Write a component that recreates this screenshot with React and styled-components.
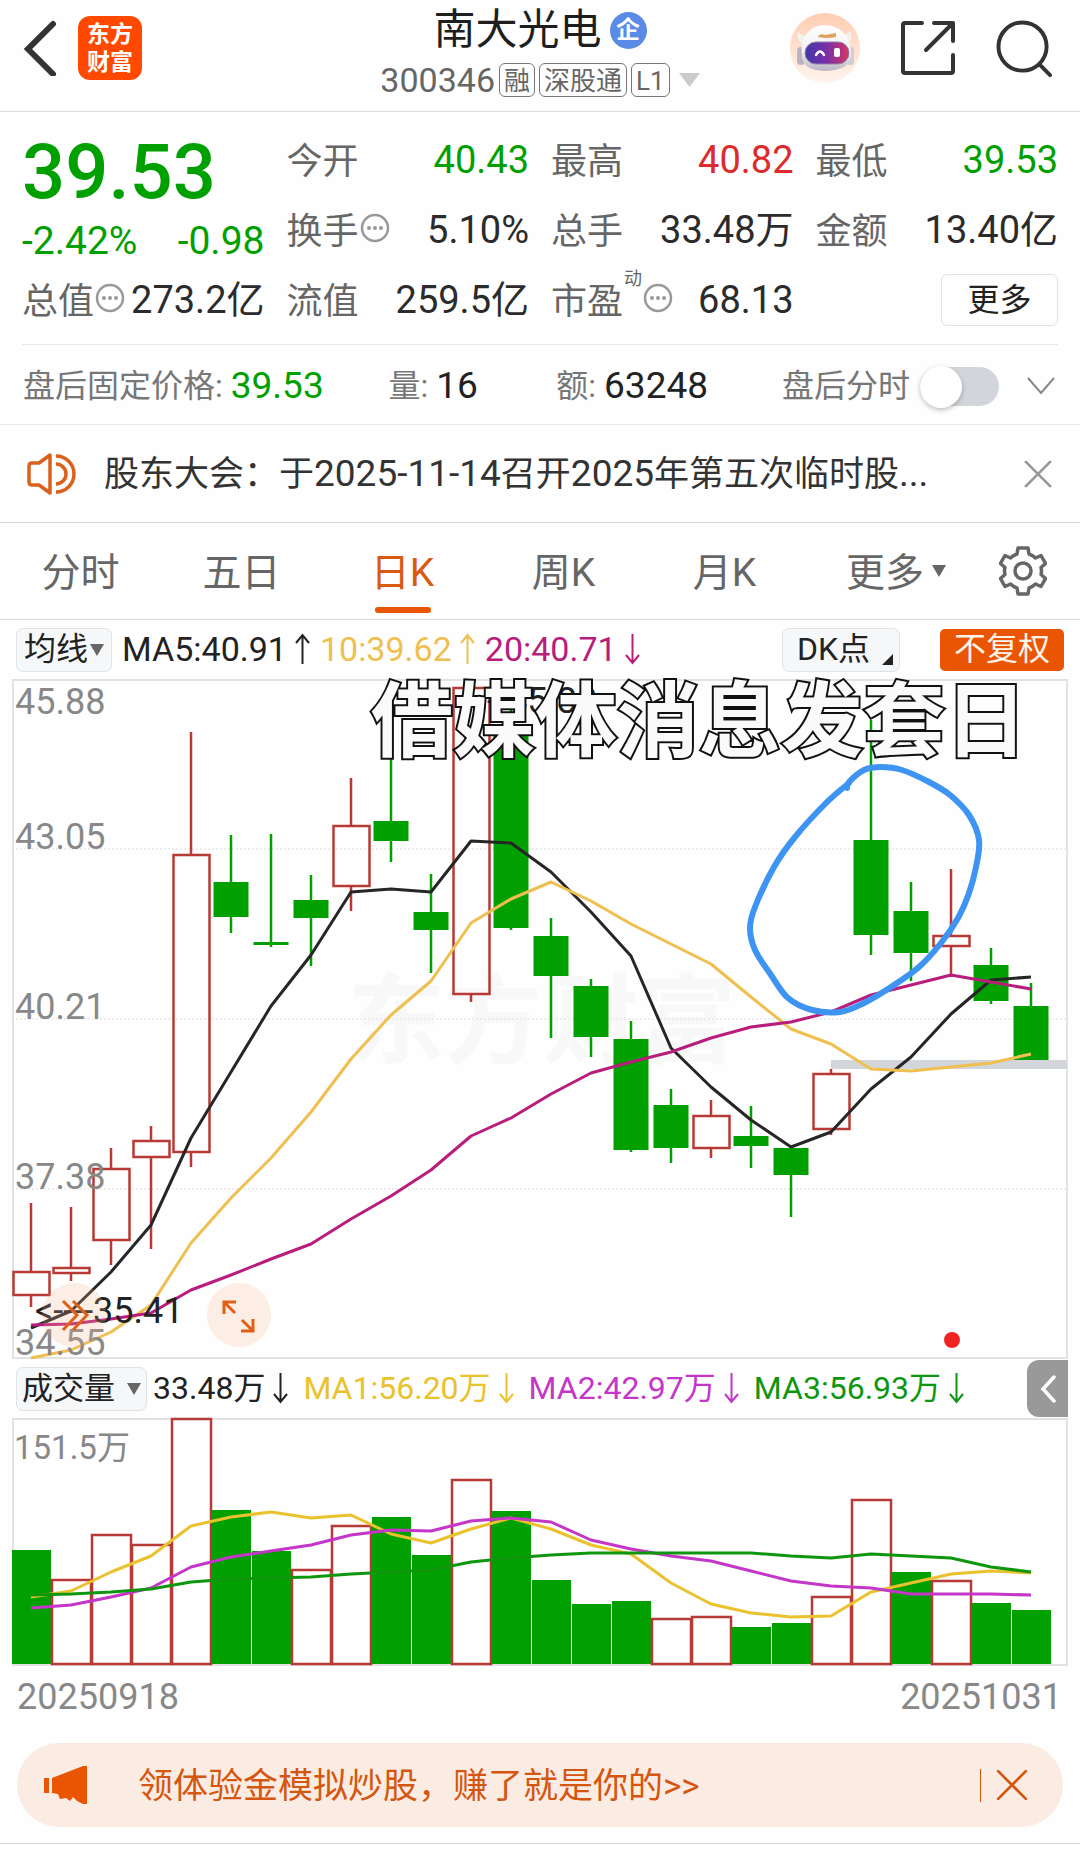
import React from "react";
import styled, { createGlobalStyle } from "styled-components";

const GREEN = "#00a000";
const RED = "#b83a36";
const ORANGE = "#ea5504";
const FONT = 'Roboto, "Noto Sans CJK SC", sans-serif';

const Global = createGlobalStyle`
  * { box-sizing: border-box; }
  body { margin: 0; background: #fefefe; color: #2b2b2b; font-family: ${FONT}; line-height: 1.2; }
  button { font-family: inherit; line-height: inherit; background: none; border: 0; padding: 0; margin: 0; color: inherit; cursor: pointer; }
  svg { display: block; }
`;

const Page = styled.div`
  display: flex;
  flex-direction: column;
  white-space: nowrap;
`;

/* ---------- header ---------- */
const Header = styled.header`
  display: grid;
  grid-template-columns: 1fr auto 1fr;
  height: 112px;
  border-bottom: 1px solid #d9dcde;
`;
const HeaderLeft = styled.div`
  display: flex;
  gap: 20px;
  padding: 16px 0 0 22px;
`;
const HeaderRight = styled.div`
  display: flex;
  justify-content: flex-end;
  gap: 40px;
  padding: 13px 27px 0 0;
`;
const IconButton = styled.button`
  display: flex;
  align-items: center;
  justify-content: center;
  height: ${(p) => p.$h || 70}px;
`;
const AppLogo = styled.div`
  width: 64px;
  height: 64px;
  border-radius: 12px;
  background: #ff4800;
  color: #fff;
  font-size: 23px;
  line-height: 28px;
  font-weight: 700;
  text-align: center;
  padding-top: 5px;
  white-space: normal;
`;
const TitleBlock = styled.div`
  display: flex;
  flex-direction: column;
  align-items: center;
`;
const Title = styled.h1`
  display: flex;
  align-items: center;
  gap: 8px;
  margin: 0;
  height: 60px;
  font-size: 42px;
  line-height: 60px;
  font-weight: 400;
  color: #1e1e1e;
`;
const CorpBadge = styled.span`
  width: 37px;
  height: 37px;
  border-radius: 50%;
  background: #5a8be6;
  color: #fff;
  font-size: 24px;
  line-height: 36px;
  font-weight: 700;
  text-align: center;
`;
const SubTitle = styled.div`
  display: flex;
  align-items: center;
  gap: 4px;
  height: 40px;
  font-size: 34px;
  color: #666;
  & > svg { margin-left: 5px; }
`;
const Tag = styled.span`
  height: 34px;
  padding: 0 4px;
  border: 1px solid #777;
  border-radius: 6px;
  font-size: 26px;
  line-height: 34px;
`;

/* ---------- quote ---------- */
const Quote = styled.section`
  display: grid;
  grid-template-columns: repeat(4, 1fr);
  grid-auto-rows: 70px;
  column-gap: 22px;
  margin: 0 22px;
  padding: 13px 0 9px;
  border-bottom: 1px solid #e8e8e8;
`;
const PriceCell = styled.div`
  grid-row: span 2;
  display: flex;
  flex-direction: column;
  padding-top: 2px;
`;
const Price = styled.div`
  font-size: 76px;
  line-height: 90px;
  font-weight: 500;
  color: ${GREEN};
`;
const Change = styled.div`
  display: flex;
  justify-content: space-between;
  font-size: 39px;
  line-height: 48px;
  color: ${GREEN};
`;
const Cell = styled.div`
  display: flex;
  align-items: center;
  justify-content: space-between;
`;
const CellLabel = styled.span`
  display: flex;
  align-items: center;
  gap: 1px;
  font-size: 36px;
  line-height: 48px;
  color: #666;
  & > svg { margin-bottom: 4px; }
`;
const LabelText = styled.span`
  padding-top: 4px;
`;
const Sup = styled.sup`
  align-self: flex-start;
  font-size: 18px;
  line-height: 10px;
`;
const CellValue = styled.span`
  padding-top: 2px;
  font-size: 38px;
  color: ${(p) => p.$c || "#2b2b2b"};
`;
const MoreButton = styled.button`
  width: 117px;
  height: 52px;
  margin-left: auto;
  border: 1px solid #e0e4e6;
  border-radius: 6px;
  font-size: 32px;
  color: #222;
`;

/* ---------- after hours ---------- */
const AfterHours = styled.section`
  display: grid;
  grid-template-columns: 366fr 168fr 226fr auto;
  align-items: center;
  height: 80px;
  padding: 3px 25px 0 23px;
  border-bottom: 1px solid #e8e8e8;
`;
const Pair = styled.div`
  display: flex;
  align-items: center;
  gap: ${(p) => p.$gap || 8}px;
  font-size: 32px;
  color: #777;
`;
const PairValue = styled.span`
  font-size: 37px;
  color: ${(p) => p.$c || "#222"};
`;
const SwitchLabel = styled.label`
  display: flex;
  align-items: center;
  gap: 10px;
  font-size: 32px;
  color: #777;
`;
const Switch = styled.input`
  appearance: none;
  position: relative;
  width: 79px;
  height: 39px;
  margin: 0;
  border-radius: 20px;
  background: #d2d6db;
  &::before {
    content: "";
    position: absolute;
    left: 0;
    top: -1px;
    width: 42px;
    height: 42px;
    border-radius: 50%;
    background: #fff;
    box-shadow: 0 2px 5px rgba(0, 0, 0, 0.25);
  }
  &:checked { background: ${ORANGE}; }
  &:checked::before { left: 37px; }
`;

/* ---------- notice ---------- */
const Notice = styled.section`
  display: flex;
  align-items: center;
  height: 98px;
  padding: 0 28px 0 26px;
  border-bottom: 1px solid #d6d6d6;
`;
const NoticeText = styled.a`
  flex: 1;
  margin-left: 28px;
  padding-top: 2px;
  font-size: 35px;
  line-height: 42px;
  color: #333;
  text-decoration: none;
`;
const Num = styled.span`
  font-size: 37px;
`;

/* ---------- tabs ---------- */
const Tabs = styled.nav`
  display: grid;
  grid-template-columns: repeat(6, 161fr) 114fr;
  height: 97px;
  border-bottom: 1px solid #d9d9d9;
`;
const Tab = styled.button`
  position: relative;
  display: flex;
  align-items: center;
  justify-content: center;
  gap: 8px;
  padding-top: 5px;
  font-size: 39px;
  color: ${(p) => (p.$on ? "#d95a14" : "#666")};
  &::after {
    content: "";
    display: ${(p) => (p.$on ? "block" : "none")};
    position: absolute;
    bottom: 6px;
    left: calc(50% - 28px);
    width: 56px;
    height: 6px;
    border-radius: 3px;
    background: ${ORANGE};
  }
`;
const MoreTab = styled(Tab)`
  justify-content: flex-end;
  padding-right: 20px;
  & > svg { margin-bottom: 6px; }
`;
const TabGear = styled.button`
  display: flex;
  align-items: center;
  justify-content: center;
`;

/* ---------- indicator rows ---------- */
const Indicators = styled.div`
  display: flex;
  align-items: center;
  height: 59px;
  padding: 0 16px;
`;
const VolumeIndicators = styled(Indicators)`
  padding-right: 12px;
`;
const Pill = styled.button`
  position: relative;
  display: flex;
  align-items: center;
  gap: ${(p) => p.$gap || 2}px;
  height: 44px;
  padding: 0 ${(p) => p.$pad || 7}px;
  border: 1px solid #e0e3e6;
  border-radius: 7px;
  background: #f5f7f9;
  font-size: ${(p) => p.$fs || 32}px;
  color: #222;
`;
const DkPill = styled(Pill)`
  width: 118px;
  margin-left: auto;
  padding: 0 14px;
  & > svg { position: absolute; right: 6px; bottom: 6px; }
`;
const Adjust = styled.button`
  width: 124px;
  height: 42px;
  margin-left: 40px;
  border-radius: 5px;
  background: ${ORANGE};
  color: #fff4ea;
  font-size: 32px;
`;
const Legend = styled.div`
  display: flex;
  align-items: center;
  gap: ${(p) => p.$gap || 10}px;
  margin-left: ${(p) => p.$start || 10}px;
  font-size: ${(p) => p.$fs || 34}px;
`;
const LegendItem = styled.span`
  display: flex;
  align-items: center;
  gap: 8px;
  color: ${(p) => p.$c};
`;
const Drawer = styled.button`
  display: flex;
  align-items: center;
  justify-content: center;
  width: 41px;
  height: 57px;
  margin-left: auto;
  border-radius: 12px 0 0 12px;
  background: #999;
`;

/* ---------- charts ---------- */
const ChartBox = styled.figure`
  position: relative;
  margin: 0 12px;
  & > svg { width: 100%; height: auto; overflow: visible; font-family: ${FONT}; }
`;
const Caption = styled.figcaption`
  position: absolute;
  top: 0;
  right: 41px;
  font-size: 82px;
  line-height: 86px;
  font-weight: 700;
  color: #fafafa;
  -webkit-text-stroke: 4px #111;
  paint-order: stroke fill;
`;
const Dates = styled.div`
  display: flex;
  justify-content: space-between;
  padding: 8px 18px 0 17px;
  font-size: 36px;
  line-height: 46px;
  color: #888;
`;

/* ---------- banner ---------- */
const Banner = styled.aside`
  display: flex;
  align-items: center;
  height: 84px;
  margin: 23px 17px 16px;
  padding: 0 35px 0 27px;
  border-radius: 42px;
  background: #fbece3;
  color: #d4560f;
`;
const BannerLink = styled.a`
  flex: 1;
  margin-left: 50px;
  padding-top: 3px;
  font-size: 35px;
  color: inherit;
  text-decoration: none;
`;
const BannerClose = styled.button`
  display: flex;
  align-items: center;
  height: 33px;
  padding-left: 15px;
  border-left: 1px solid #d4560f;
`;
const Foot = styled.footer`
  height: 14px;
  border-top: 1px solid #d4dada;
`;

/* ---------- icons ---------- */
const Dots = () => (
  <svg width="30" height="30" viewBox="0 0 30 30" fill="#999">
    <circle cx="15" cy="15" r="13" fill="none" stroke="#999" strokeWidth="2.5" />
    <circle cx="9" cy="15" r="2" /><circle cx="15" cy="15" r="2" /><circle cx="21" cy="15" r="2" />
  </svg>
);
const Down = ({ w = 14, h = 12, c = "#666" }) => (
  <svg width={w} height={h} viewBox="0 0 14 12" preserveAspectRatio="none"><path d="M0 0H14L7 12Z" fill={c} /></svg>
);
const Arrow = ({ up }) => (
  <svg width="15" height="32" viewBox="0 0 15 32" fill="none" stroke="currentColor" strokeWidth="2">
    <path d={up ? "M7.5 31V2M1 10L7.5 2L14 10" : "M7.5 1V30M1 22L7.5 30L14 22"} />
  </svg>
);
const Cross = ({ size, c, sw }) => (
  <svg width={size} height={size} viewBox="0 0 30 30" stroke={c} strokeWidth={sw} strokeLinecap="round"><path d="M2 2L28 28M28 2L2 28" /></svg>
);
const Robot = () => (
  <svg width="70" height="70" viewBox="0 0 70 70">
    <defs>
      <linearGradient id="halo" x1="0" y1="0" x2="0" y2="1"><stop offset="0" stopColor="#ffcdb2" /><stop offset="1" stopColor="#fff4ee" /></linearGradient>
      <linearGradient id="visor"><stop offset="0" stopColor="#4438a8" /><stop offset=".5" stopColor="#7a2fa6" /><stop offset="1" stopColor="#d8365f" /></linearGradient>
      <linearGradient id="shell" x1="0" y1="0" x2="0" y2="1"><stop offset="0" stopColor="#fff" /><stop offset=".6" stopColor="#f1eef2" /><stop offset="1" stopColor="#b9b4c0" /></linearGradient>
    </defs>
    <circle cx="35" cy="35" r="35" fill="url(#halo)" />
    <path d="M8 19Q6 28 13 31L21 23Q13 24 8 19ZM60 17Q64 27 57 31L50 22Q57 23 60 17Z" fill="#f5efee" />
    <rect x="7" y="34" width="8" height="18" rx="4" fill="#b9b4bf" />
    <rect x="57" y="34" width="7" height="18" rx="3" fill="#d2ccd4" />
    <path d="M12 42C10 24 19 13 34 12C50 12 62 24 61 41C61 52 53 57 35 58C20 57 12 53 12 42Z" fill="url(#shell)" />
    <rect x="15" y="29" width="44" height="22" rx="11" fill="url(#visor)" stroke="#8d82a8" />
    <path d="M26 42Q30 35 34 42" fill="none" stroke="#fff" strokeWidth="2.5" strokeLinecap="round" />
    <rect x="44" y="35" width="6" height="9" rx="2" fill="#fff" />
    <path d="M28 24Q29 20 35 22L46 20V24Q36 26 28 24Z" fill="#e2a15f" />
  </svg>
);
const Gear = () => (
  <svg width="48" height="50" viewBox="0 0 48 50" fill="none" stroke="#666" strokeWidth="3.5" strokeLinejoin="round">
    <path d="M19 2H29L30 8Q34 9.500 36.500 12L42 9.500L46.500 17.500L42 21.500Q43 25 42 28.500L46.500 32.500L42 40.500L36.500 38Q34 40.500 30 42L29 48H19L18 42Q14 40.500 11.500 38L6 40.500L1.500 32.500L6 28.500Q5 25 6 21.500L1.500 17.500L6 9.500L11.500 12Q14 9.500 18 8Z" />
    <circle cx="24" cy="25" r="8" />
  </svg>
);

/* ---------- data: x step is 40 per day, y is measured inside each plot ---------- */
const xAt = (i) => 19 + 40 * i;
// [high, body top, body bottom, low, rising]
const candles = [
  [524, 593, 616, 628, 1], [528, 589, 594, 602, 1], [469, 490, 561, 586, 1], [447, 462, 478, 570, 1],
  [53, 176, 473, 488, 1], [156, 203, 238, 254, 0], [155, 263, 266, 268, 0], [196, 221, 239, 287, 0],
  [99, 147, 207, 232, 1], [71, 142, 162, 183, 0], [195, 233, 251, 294, 0], [9, 9, 315, 323, 1],
  [26, 45, 249, 251, 0], [239, 257, 297, 359, 0], [300, 307, 358, 378, 0], [342, 360, 471, 473, 0],
  [410, 426, 469, 484, 0], [421, 437, 469, 479, 1], [427, 457, 467, 489, 0], [469, 469, 496, 538, 0],
  [390, 395, 450, 456, 1], [41, 161, 256, 276, 0], [203, 232, 274, 302, 0], [190, 257, 267, 298, 1],
  [269, 286, 322, 325, 0], [304, 327, 381, 381, 0],
];
const ma5 = [649, 632, 593, 546, 459, 393, 327, 276, 213, 210, 213, 162, 164, 193, 233, 277, 369, 408, 441, 468, 453, 410, 378, 335, 301, 298];
const ma10 = [679, 671, 653, 626, 564, 519, 479, 433, 380, 336, 302, 244, 220, 203, 222, 245, 265, 285, 318, 350, 365, 390, 392, 388, 384, 375];
const ma20 = [646, 645, 640, 634, 611, 596, 580, 565, 540, 517, 491, 457, 439, 415, 394, 383, 373, 359, 348, 343, 333, 316, 306, 296, 303, 310];
// [bar top, rising]
const volumes = [
  [132, 0], [162, 1], [117, 1], [127, 1], [1, 1], [92, 0], [133, 0], [152, 1], [108, 1], [99, 0], [137, 0], [62, 1], [93, 0],
  [162, 0], [186, 0], [183, 0], [201, 1], [199, 1], [209, 0], [205, 0], [179, 1], [82, 1], [154, 0], [163, 1], [185, 0], [192, 0],
];
const vma1 = [179, 173, 154, 138, 108, 99, 94, 100, 97, 116, 125, 111, 100, 111, 127, 136, 165, 186, 195, 199, 198, 174, 165, 156, 153, 155];
const vma2 = [190, 187, 179, 170, 149, 139, 133, 127, 117, 112, 113, 103, 100, 104, 122, 131, 138, 143, 153, 163, 168, 170, 176, 176, 176, 177];
const vma3 = [177, 176, 174, 171, 164, 161, 160, 159, 156, 154, 152, 144, 140, 137, 135, 135, 135, 135, 135, 138, 140, 136, 138, 140, 149, 154];
const ring = [
  [835, 109], [837, 103], [852, 91], [869, 88], [890, 91], [917, 103], [938, 116], [957, 136], [967, 161], [964, 188], [957, 214],
  [946, 239], [929, 264], [907, 288], [879, 308], [852, 324], [828, 333], [800, 331], [776, 319], [759, 296], [743, 271], [738, 249],
  [743, 228], [762, 188], [783, 158], [814, 124], [837, 104],
];

const points = (ys) => ys.map((y, i) => `${xAt(i)},${y}`).join(" ");
const smooth = (pts) =>
  pts.slice(0, -1).reduce((d, p, i) => {
    const a = pts[i - 1] || p;
    const q = pts[i + 1];
    const b = pts[i + 2] || q;
    return `${d}C${p[0] + (q[0] - a[0]) / 6} ${p[1] + (q[1] - a[1]) / 6} ${q[0] - (b[0] - p[0]) / 6} ${q[1] - (b[1] - p[1]) / 6} ${q[0]} ${q[1]}`;
  }, `M${pts[0][0]} ${pts[0][1]}`);

const Line = ({ ys, c }) => <polyline points={points(ys)} fill="none" stroke={c} strokeWidth="3" strokeLinejoin="round" />;

const Candle = ({ i, d: [high, top, bottom, low, up] }) => {
  const x = xAt(i);
  const c = up ? RED : GREEN;
  return (
    <g stroke={c} strokeWidth="2.5">
      <path d={up ? `M${x} ${high}V${top}M${x} ${bottom}V${low}` : `M${x} ${high}V${low}`} />
      {up ? <rect x={x - 17.5} y={top} width="36" height={bottom - top} fill="none" />
        : <rect x={x - 17.5} y={top} width="35" height={bottom - top} fill={c} stroke="none" />}
    </g>
  );
};

const KChart = () => (
  <ChartBox>
    <svg viewBox="0 0 1056 680" role="img" aria-label="日K">
      <text x="336" y="376" fontSize="97" fontWeight="700" fill="#f8f8f8">东方财富</text>
      <rect x="1" y="1" width="1054" height="678" fill="none" stroke="#e2e2e2" strokeWidth="2" />
      <path d="M0 170H1056M0 340H1056M0 510H1056" stroke="#ddd" strokeWidth="1" strokeDasharray="2 2" />
      <rect x="819" y="381" width="236" height="9" fill="#d2d6db" />
      {candles.map((d, i) => <Candle key={i} i={i} d={d} />)}
      <Line ys={ma5} c="#262626" />
      <Line ys={ma10} c="#efbf50" />
      <Line ys={ma20} c="#b91d7c" />
      <g fontSize="36" fill="#888">
        <text x="3" y="35">45.88</text>
        <text x="3" y="170">43.05</text>
        <text x="3" y="340">40.21</text>
        <text x="3" y="510">37.38</text>
        <text x="3" y="676">34.55</text>
      </g>
      <text x="23" y="644" fontSize="36" fill="#222">&lt;----35.41</text>
      <text x="475" y="34" fontSize="36" fill="#222">--45.88</text>
      <g fill="#f9b48c" fillOpacity=".22"><circle cx="62" cy="636" r="32" /><circle cx="227" cy="636" r="32" /></g>
      <g fill="none" stroke="#e0601a" strokeWidth="3">
        <path d="M51 622L65 636L51 651M61 622L75 636L61 651" />
        <path d="M212 635V623H224M212 623L223 634M241 640V652H229M241 652L230 641" />
      </g>
      <circle cx="940" cy="661" r="8" fill="#ee2222" />
      <path d={smooth(ring)} fill="none" stroke="#3d94f2" strokeWidth="6" strokeLinecap="round" strokeLinejoin="round" />
    </svg>
    <Caption>借媒体消息发套日</Caption>
  </ChartBox>
);

const VolumeChart = () => (
  <ChartBox>
    <svg viewBox="0 0 1056 248" role="img" aria-label="成交量">
      <rect x="1" y="1" width="1054" height="246" fill="none" stroke="#e2e2e2" strokeWidth="2" />
      <text x="2" y="41" fontSize="33" fill="#888">151.5万</text>
      {volumes.map(([top, up], i) => up
        ? <rect key={i} x={xAt(i) - 19} y={top} width="39" height={246 - top} fill="#fefefe" stroke={RED} strokeWidth="2.5" />
        : <rect key={i} x={xAt(i) - 19} y={top} width="39" height={246 - top} fill={GREEN} />)}
      <Line ys={vma1} c="#e9c22d" />
      <Line ys={vma2} c="#c436c8" />
      <Line ys={vma3} c="#0f960f" />
    </svg>
  </ChartBox>
);

const Quoted = ({ label, value, c, dots, sup }) => (
  <Cell>
    <CellLabel><LabelText>{label}</LabelText>{sup && <Sup>{sup}</Sup>}{dots && <Dots />}</CellLabel>
    <CellValue $c={c}>{value}</CellValue>
  </Cell>
);

export default function App() {
  return (
    <Page>
      <Global />
      <Header>
        <HeaderLeft>
          <IconButton $h={64} aria-label="返回">
            <svg width="36" height="56" viewBox="0 0 36 56" fill="none" stroke="#333" strokeWidth="6"><path d="M31 4L6 29L31 54" strokeLinecap="round" /></svg>
          </IconButton>
          <AppLogo>东方<br />财富</AppLogo>
        </HeaderLeft>
        <TitleBlock>
          <Title>南大光电<CorpBadge>企</CorpBadge></Title>
          <SubTitle>300346<Tag>融</Tag><Tag>深股通</Tag><Tag>L1</Tag><Down w={21} h={14} c="#ccc" /></SubTitle>
        </TitleBlock>
        <HeaderRight>
          <IconButton aria-label="智能助手"><Robot /></IconButton>
          <IconButton aria-label="分享">
            <svg width="56" height="56" viewBox="0 0 56 56" fill="none" stroke="#333" strokeWidth="4" strokeLinecap="round" strokeLinejoin="round">
              <path d="M22 3H5Q3 3 3 5V51Q3 53 5 53H51Q53 53 53 51V35M34 3H53V21M52 4L26 30" />
            </svg>
          </IconButton>
          <IconButton aria-label="搜索">
            <svg width="57" height="57" viewBox="0 0 58 58" fill="none" stroke="#333" strokeWidth="4" strokeLinecap="round"><circle cx="27" cy="27" r="24.500" /><path d="M44 45L55 56" /></svg>
          </IconButton>
        </HeaderRight>
      </Header>

      <Quote>
        <PriceCell>
          <Price>39.53</Price>
          <Change><span>-2.42%</span><span>-0.98</span></Change>
        </PriceCell>
        <Quoted label="今开" value="40.43" c={GREEN} />
        <Quoted label="最高" value="40.82" c="#dd2b2b" />
        <Quoted label="最低" value="39.53" c={GREEN} />
        <Quoted label="换手" dots value="5.10%" />
        <Quoted label="总手" value="33.48万" />
        <Quoted label="金额" value="13.40亿" />
        <Quoted label="总值" dots value="273.2亿" />
        <Quoted label="流值" value="259.5亿" />
        <Quoted label="市盈" sup="动" dots value="68.13" />
        <Cell><MoreButton>更多</MoreButton></Cell>
      </Quote>

      <AfterHours>
        <Pair>盘后固定价格: <PairValue $c={GREEN}>39.53</PairValue></Pair>
        <Pair>量: <PairValue>16</PairValue></Pair>
        <Pair>额: <PairValue>63248</PairValue></Pair>
        <Pair $gap={28}>
          <SwitchLabel>盘后分时<Switch type="checkbox" /></SwitchLabel>
          <IconButton $h={40} aria-label="展开">
            <svg width="28" height="18" viewBox="0 0 28 18" fill="none" stroke="#888" strokeWidth="2"><path d="M1 1L14 16L27 1" /></svg>
          </IconButton>
        </Pair>
      </AfterHours>

      <Notice>
        <svg width="50" height="42" viewBox="0 0 50 42" fill="none" stroke="#d9611c" strokeWidth="3.500" strokeLinejoin="round">
          <path d="M24 2V40L13 32H6Q3 32 3 29V13Q3 10 6 10H13Z" />
          <path d="M30 11A10 10 0 0 1 30 31M30 3A18 18 0 0 1 30 39" />
        </svg>
        <NoticeText href="#notice">股东大会：于<Num>2025-11-14</Num>召开<Num>2025</Num>年第五次临时股<Num>...</Num></NoticeText>
        <IconButton $h={30} aria-label="关闭"><Cross size={28} c="#999" sw={3} /></IconButton>
      </Notice>

      <Tabs>
        <Tab>分时</Tab>
        <Tab>五日</Tab>
        <Tab $on>日K</Tab>
        <Tab>周K</Tab>
        <Tab>月K</Tab>
        <MoreTab>更多<Down /></MoreTab>
        <TabGear aria-label="设置"><Gear /></TabGear>
      </Tabs>

      <Indicators>
        <Pill>均线<Down w={14} h={12} /></Pill>
        <Legend>
          <LegendItem $c="#222">MA5:40.91<Arrow up /></LegendItem>
          <LegendItem $c="#efbf50">10:39.62<Arrow up /></LegendItem>
          <LegendItem $c="#b91d7c">20:40.71<Arrow /></LegendItem>
        </Legend>
        <DkPill>DK点<svg width="11" height="11" viewBox="0 0 11 11"><path d="M11 0V11H0Z" fill="#222" /></svg></DkPill>
        <Adjust>不复权</Adjust>
      </Indicators>
      <KChart />

      <VolumeIndicators>
        <Pill $gap={12} $fs={31} $pad={5}>成交量<Down w={14} h={12} /></Pill>
        <Legend $gap={15} $fs={32} $start={6}>
          <LegendItem $c="#222">33.48万<Arrow /></LegendItem>
          <LegendItem $c="#e9c22d">MA1:56.20万<Arrow /></LegendItem>
          <LegendItem $c="#c436c8">MA2:42.97万<Arrow /></LegendItem>
          <LegendItem $c="#0f960f">MA3:56.93万<Arrow /></LegendItem>
        </Legend>
        <Drawer aria-label="展开侧栏">
          <svg width="16" height="28" viewBox="0 0 16 28" fill="none" stroke="#fff" strokeWidth="3.500" strokeLinecap="round"><path d="M14 2L3 14L14 26" /></svg>
        </Drawer>
      </VolumeIndicators>
      <VolumeChart />
      <Dates><span>20250918</span><span>20251031</span></Dates>

      <Banner>
        <svg width="44" height="38" viewBox="0 0 44 38" fill={ORANGE}>
          <path d="M0 12H5V27H0ZM8 12L39 0H43V38H39L33 35L29 31L26 35L22 32L16 33L14 28L8 27Z" />
        </svg>
        <BannerLink href="#trial">领体验金模拟炒股，赚了就是你的&gt;&gt;</BannerLink>
        <BannerClose aria-label="关闭"><Cross size={32} c="#d4560f" sw={2.5} /></BannerClose>
      </Banner>
      <Foot />
    </Page>
  );
}
